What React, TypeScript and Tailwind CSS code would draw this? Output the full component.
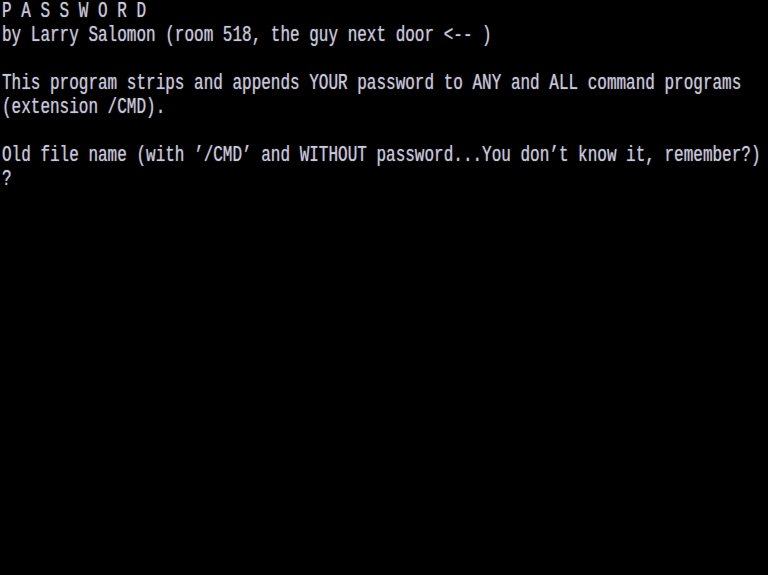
import React from "react";

const lines = [
    "P A S S W O R D",
    "by Larry Salomon (room 518, the guy next door <-- )",
    "",
    "This program strips and appends YOUR password to ANY and ALL command programs",
    "(extension /CMD).",
    "",
    "Old file name (with \u2019/CMD\u2019 and WITHOUT password...You don\u2019t know it, remember?)",
    "?",
];

const App = () => {
    return (
        <div
            className="w-[768px] h-[575px] bg-black overflow-hidden pl-[2px]"
            style={{fontFamily: '"Liberation Mono", monospace'}}
        >
            {lines.map((line, i) => (
                <div key={i} className="h-[24px]">
                    <span className="block h-[16px] leading-[16px] text-[16px] whitespace-pre text-[#c9c8dc] scale-y-[1.42] origin-top [text-shadow:0_0_1px_rgba(200,200,220,0.6)]">
                        {line}
                    </span>
                </div>
            ))}
        </div>
    );
};

export default App;
